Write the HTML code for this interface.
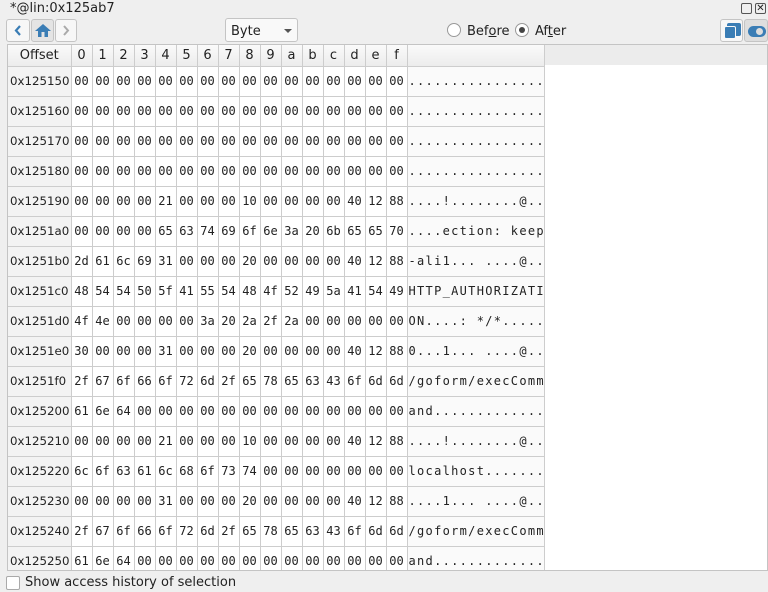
<!DOCTYPE html>
<html><head><meta charset="utf-8"><style>
*{box-sizing:border-box;margin:0;padding:0}
body{width:768px;height:592px;background:#efefef;font-family:"DejaVu Sans","Liberation Sans",sans-serif;font-size:13px;color:#222;position:relative;overflow:hidden}
.abs{position:absolute}
.btn{position:absolute;top:19px;height:23px;border:1px solid #c4c4c4;border-radius:3px;background:#f7f7f7}
#grid{position:absolute;left:7px;top:44px;width:761px;height:527px;border:1px solid #c4c4c4;background:#fff;overflow:hidden}
#hdrfill{position:absolute;left:536px;top:0;right:0;height:20px;background:#ececec;border-left:1px solid #c4c4c4}
table{border-collapse:collapse;table-layout:fixed;position:absolute;left:0;top:0;width:536px}
td,th{border:1px solid #cdcdcd;text-align:center;white-space:nowrap;overflow:hidden}
th{height:21px;font-weight:normal;background:linear-gradient(#fafafa,#ececec);font-size:13px;border-color:#cdcdcd;border-top:none}
td{height:30px;font-family:"DejaVu Sans Mono","Liberation Mono",monospace;font-size:12px;padding:0}
td.o{font-family:"DejaVu Sans","Liberation Sans",sans-serif;font-size:11.8px;background:#f3f3f3;text-align:left;padding-left:2px}
td.a{text-align:left;background:#fafafa;letter-spacing:1.3px;padding-left:1px}
tr td:first-child,tr th:first-child{border-left:none}
</style></head><body>
<div class="abs" style="left:10px;top:1px;font-size:13px">*@lin:0x125ab7</div>
<div class="btn" style="left:6px;width:24px"><svg width="22" height="21" style="position:absolute;left:0;top:0"><path d="M13 6 L9 10.5 L13 15" stroke="#3a7db5" stroke-width="2.2" fill="none"/></svg></div>
<div class="btn" style="left:31px;width:23px;background:#e4e4e4"><svg width="22" height="21" style="position:absolute;left:0;top:0"><path d="M3 11 L11 4 L19 11 Z" fill="#3a7db5"/><rect x="6" y="10" width="10" height="7" fill="#3a7db5"/><rect x="9.5" y="12" width="3" height="5" fill="#e4e4e4"/></svg></div>
<div class="btn" style="left:55px;width:22px"><svg width="20" height="21" style="position:absolute;left:0;top:0"><path d="M8 6 L12 10.5 L8 15" stroke="#aaa" stroke-width="2" fill="none"/></svg></div>
<div class="btn" style="left:225px;width:73px;top:18px;height:24px;background:#f9f9f9"><span class="abs" style="left:5px;top:5px;font-size:13px">Byte</span><span class="abs" style="left:58px;top:10px;width:0;height:0;border-left:4px solid transparent;border-right:4px solid transparent;border-top:4px solid #555"></span></div>
<div class="abs" style="left:447px;top:23px;width:14px;height:14px;border:1px solid #999;border-radius:50%;background:#fff"></div>
<div class="abs" style="left:467px;top:24px">Bef<span style="text-decoration:underline">o</span>re</div>
<div class="abs" style="left:515px;top:23px;width:14px;height:14px;border:1px solid #999;border-radius:50%;background:#fff"><div class="abs" style="left:3px;top:3px;width:6px;height:6px;border-radius:50%;background:#444"></div></div>
<div class="abs" style="left:535px;top:24px">Af<span style="text-decoration:underline">t</span>er</div>
<div class="abs" style="left:741px;top:3px;width:11px;height:11px;border:1px solid #555;border-radius:2px"></div>
<div class="abs" style="left:755px;top:3px;width:11px;height:11px;border:1px solid #555;border-radius:2px;font-size:10px;line-height:9px;text-align:center">✕</div>
<div class="btn" style="left:720px;width:23px;top:19px;height:23px"><div class="abs" style="left:6px;top:3px;width:14px;height:13px;background:#3a7db5;border-radius:2px"></div><div class="abs" style="left:3px;top:6px;width:12px;height:13px;background:#3a7db5;border:1px solid #f7f7f7;border-radius:2px"></div></div>
<div class="btn" style="left:744px;width:24px;top:19px;height:23px;background:#dedede"><div class="abs" style="left:3px;top:6px;width:18px;height:11px;background:#3a7db5;border-radius:6px"></div><div class="abs" style="left:11px;top:8px;width:7px;height:7px;background:#ddd;border-radius:50%"></div></div>
<div id="grid"><div id="hdrfill"></div>
<table>
<colgroup><col style="width:63px"><col span="16" style="width:21px"><col style="width:137px"></colgroup>
<tr><th>Offset</th><th>0</th><th>1</th><th>2</th><th>3</th><th>4</th><th>5</th><th>6</th><th>7</th><th>8</th><th>9</th><th>a</th><th>b</th><th>c</th><th>d</th><th>e</th><th>f</th><th style="border-right:1px solid #cdcdcd"></th></tr>
<tr><td class="o">0x125150</td><td>00</td><td>00</td><td>00</td><td>00</td><td>00</td><td>00</td><td>00</td><td>00</td><td>00</td><td>00</td><td>00</td><td>00</td><td>00</td><td>00</td><td>00</td><td>00</td><td class="a">................</td></tr>
<tr><td class="o">0x125160</td><td>00</td><td>00</td><td>00</td><td>00</td><td>00</td><td>00</td><td>00</td><td>00</td><td>00</td><td>00</td><td>00</td><td>00</td><td>00</td><td>00</td><td>00</td><td>00</td><td class="a">................</td></tr>
<tr><td class="o">0x125170</td><td>00</td><td>00</td><td>00</td><td>00</td><td>00</td><td>00</td><td>00</td><td>00</td><td>00</td><td>00</td><td>00</td><td>00</td><td>00</td><td>00</td><td>00</td><td>00</td><td class="a">................</td></tr>
<tr><td class="o">0x125180</td><td>00</td><td>00</td><td>00</td><td>00</td><td>00</td><td>00</td><td>00</td><td>00</td><td>00</td><td>00</td><td>00</td><td>00</td><td>00</td><td>00</td><td>00</td><td>00</td><td class="a">................</td></tr>
<tr><td class="o">0x125190</td><td>00</td><td>00</td><td>00</td><td>00</td><td>21</td><td>00</td><td>00</td><td>00</td><td>10</td><td>00</td><td>00</td><td>00</td><td>00</td><td>40</td><td>12</td><td>88</td><td class="a">....!........@..</td></tr>
<tr><td class="o">0x1251a0</td><td>00</td><td>00</td><td>00</td><td>00</td><td>65</td><td>63</td><td>74</td><td>69</td><td>6f</td><td>6e</td><td>3a</td><td>20</td><td>6b</td><td>65</td><td>65</td><td>70</td><td class="a">....ection:&nbsp;keep</td></tr>
<tr><td class="o">0x1251b0</td><td>2d</td><td>61</td><td>6c</td><td>69</td><td>31</td><td>00</td><td>00</td><td>00</td><td>20</td><td>00</td><td>00</td><td>00</td><td>00</td><td>40</td><td>12</td><td>88</td><td class="a">-ali1...&nbsp;....@..</td></tr>
<tr><td class="o">0x1251c0</td><td>48</td><td>54</td><td>54</td><td>50</td><td>5f</td><td>41</td><td>55</td><td>54</td><td>48</td><td>4f</td><td>52</td><td>49</td><td>5a</td><td>41</td><td>54</td><td>49</td><td class="a">HTTP_AUTHORIZATI</td></tr>
<tr><td class="o">0x1251d0</td><td>4f</td><td>4e</td><td>00</td><td>00</td><td>00</td><td>00</td><td>3a</td><td>20</td><td>2a</td><td>2f</td><td>2a</td><td>00</td><td>00</td><td>00</td><td>00</td><td>00</td><td class="a">ON....:&nbsp;*/*.....</td></tr>
<tr><td class="o">0x1251e0</td><td>30</td><td>00</td><td>00</td><td>00</td><td>31</td><td>00</td><td>00</td><td>00</td><td>20</td><td>00</td><td>00</td><td>00</td><td>00</td><td>40</td><td>12</td><td>88</td><td class="a">0...1...&nbsp;....@..</td></tr>
<tr><td class="o">0x1251f0</td><td>2f</td><td>67</td><td>6f</td><td>66</td><td>6f</td><td>72</td><td>6d</td><td>2f</td><td>65</td><td>78</td><td>65</td><td>63</td><td>43</td><td>6f</td><td>6d</td><td>6d</td><td class="a">/goform/execComm</td></tr>
<tr><td class="o">0x125200</td><td>61</td><td>6e</td><td>64</td><td>00</td><td>00</td><td>00</td><td>00</td><td>00</td><td>00</td><td>00</td><td>00</td><td>00</td><td>00</td><td>00</td><td>00</td><td>00</td><td class="a">and.............</td></tr>
<tr><td class="o">0x125210</td><td>00</td><td>00</td><td>00</td><td>00</td><td>21</td><td>00</td><td>00</td><td>00</td><td>10</td><td>00</td><td>00</td><td>00</td><td>00</td><td>40</td><td>12</td><td>88</td><td class="a">....!........@..</td></tr>
<tr><td class="o">0x125220</td><td>6c</td><td>6f</td><td>63</td><td>61</td><td>6c</td><td>68</td><td>6f</td><td>73</td><td>74</td><td>00</td><td>00</td><td>00</td><td>00</td><td>00</td><td>00</td><td>00</td><td class="a">localhost.......</td></tr>
<tr><td class="o">0x125230</td><td>00</td><td>00</td><td>00</td><td>00</td><td>31</td><td>00</td><td>00</td><td>00</td><td>20</td><td>00</td><td>00</td><td>00</td><td>00</td><td>40</td><td>12</td><td>88</td><td class="a">....1...&nbsp;....@..</td></tr>
<tr><td class="o">0x125240</td><td>2f</td><td>67</td><td>6f</td><td>66</td><td>6f</td><td>72</td><td>6d</td><td>2f</td><td>65</td><td>78</td><td>65</td><td>63</td><td>43</td><td>6f</td><td>6d</td><td>6d</td><td class="a">/goform/execComm</td></tr>
<tr><td class="o">0x125250</td><td>61</td><td>6e</td><td>64</td><td>00</td><td>00</td><td>00</td><td>00</td><td>00</td><td>00</td><td>00</td><td>00</td><td>00</td><td>00</td><td>00</td><td>00</td><td>00</td><td class="a">and.............</td></tr>
</table></div>
<div class="abs" style="left:6px;top:576px;width:14px;height:14px;border:1px solid #aaa;border-radius:2px;background:#fff"></div>
<div class="abs" style="left:25px;top:575px">Show access history of selection</div>
</body></html>
